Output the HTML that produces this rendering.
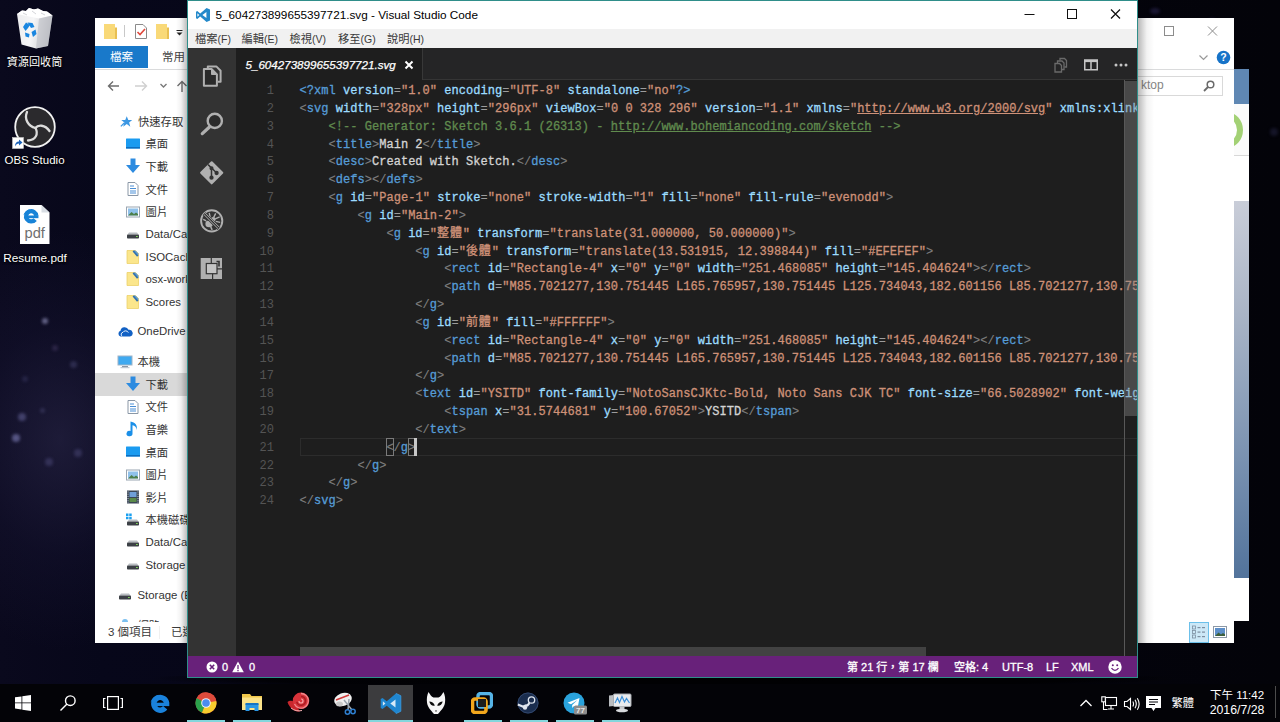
<!DOCTYPE html>
<html lang="zh-Hant">
<head>
<meta charset="utf-8">
<title>5_604273899655397721.svg - Visual Studio Code</title>
<style>
*{box-sizing:border-box;margin:0;padding:0}
html,body{width:1280px;height:722px;overflow:hidden;background:#05050f}
body{position:relative;font-family:"Liberation Sans","Noto Sans CJK TC",sans-serif;font-size:12px;color:#000}
.abs{position:absolute}
#desktop{position:absolute;left:0;top:0;width:1280px;height:722px;overflow:hidden;
 background:
 radial-gradient(ellipse 150px 210px at 60px 440px, rgba(50,46,84,.5), rgba(30,27,62,.28) 55%, rgba(0,0,0,0) 100%),
 linear-gradient(90deg,#0a091d 0,#07071a 8%,#040410 60%,#030309 100%);}
.star{position:absolute;border-radius:50%;background:rgba(150,150,200,.35);filter:blur(1.5px)}
.dicon{position:absolute;color:#fff;font-size:11.5px;text-align:center;white-space:nowrap;text-shadow:0 1px 2px #000,0 0 3px #000}
/* ---------- explorer ---------- */
#exp{position:absolute;left:95px;top:18px;width:1139px;height:625px;background:#fff;overflow:hidden}
#exp .t{position:absolute;white-space:nowrap;color:#333;font-size:12px;line-height:14px}
/* ---------- third window ---------- */
#w3{position:absolute;left:1234px;top:69px;width:15px;height:552px;background:#fff;overflow:hidden}
/* ---------- vscode ---------- */
#vs{position:absolute;left:187px;top:0;width:951px;height:678px;background:#1e1e1e;border:1px solid #2f8e8a;overflow:hidden}
#vs .titlebar{position:absolute;left:0;top:0;width:949px;height:28px;background:#fff}
#vs .menubar{position:absolute;left:0;top:28px;width:949px;height:19px;background:#f1f1f1;font-size:10.5px;color:#3a3a3a}
#vs .menubar span{position:absolute;top:3px;line-height:14px;white-space:nowrap}
#vs .menubar b{font-weight:normal;font-size:11.250px}
#act{position:absolute;left:0;top:47px;width:47.500px;height:608px;background:#333}
#tabs{position:absolute;left:48px;top:47px;width:901px;height:32px;background:#252526;border-bottom:1px solid #353535}
#tab1{position:absolute;left:0;top:0;width:187px;height:32px;background:#1e1e1e;border-right:1px solid #383838;color:#fff;font-style:italic;font-size:11.5px}
#code{position:absolute;left:48px;top:79px;width:901px;height:576px;background:#1e1e1e;overflow:hidden;
 font-family:"Liberation Mono","Noto Sans CJK TC",monospace;font-size:12px;letter-spacing:.038px;color:#d4d4d4;-webkit-text-stroke:.3px}
.ln{position:absolute;left:0;width:38px;text-align:right;color:#545454;-webkit-text-stroke:0;height:18px;line-height:18px;white-space:pre}
.cl{position:absolute;left:63.500px;height:18px;line-height:18px;white-space:pre}
.e{color:#9c9c9c;-webkit-text-stroke:0}.g{color:#808080;-webkit-text-stroke:.1px}.b{color:#569cd6}.a{color:#9cdcfe}.s{color:#ce9178}.c{color:#608b4e}.u{text-decoration:underline}
.cj{letter-spacing:.78px;font-style:normal}
#status{position:absolute;left:0;top:655px;width:949px;height:21px;background:#68217a;color:#fff;font-size:11px}
#status span{position:absolute;top:3.800px;line-height:15px;white-space:nowrap;-webkit-text-stroke:.3px}
/* ---------- taskbar ---------- */
#task{position:absolute;left:0;top:682px;width:1280px;height:40px;background:linear-gradient(180deg,rgba(3,3,8,0) 0,rgba(3,3,8,0) 2px,#030307 2.500px)}
.ul{position:absolute;top:38px;height:2px;background:#84d6dc}
</style>
</head>
<body>
<div id="desktop">
 <div class="star" style="left:42px;top:318px;width:6px;height:6px;background:rgba(170,170,215,.55)"></div>
<div class="star" style="left:18px;top:413px;width:8px;height:8px;background:rgba(130,130,195,.4)"></div>
<div class="star" style="left:12px;top:434px;width:8px;height:8px;background:rgba(150,150,215,.5)"></div>
<div class="star" style="left:45px;top:458px;width:8px;height:8px;background:rgba(110,105,170,.3)"></div>
<div class="star" style="left:74px;top:449px;width:8px;height:8px;background:rgba(110,105,170,.3)"></div>
<div class="star" style="left:70px;top:361px;width:7px;height:7px;background:rgba(110,110,170,.28)"></div>
<div class="star" style="left:52px;top:345px;width:6px;height:6px;background:rgba(120,100,160,.25)"></div>
<div class="star" style="left:40px;top:408px;width:5px;height:5px;background:rgba(120,120,180,.25)"></div>
<div class="star" style="left:22px;top:376px;width:6px;height:6px;background:rgba(100,100,160,.22)"></div>
<div class="star" style="left:1208px;top:18px;width:8px;height:8px;background:rgba(60,60,110,.35)"></div>
<div class="star" style="left:1270px;top:128px;width:8px;height:8px;background:rgba(60,60,110,.3)"></div>
<div class="star" style="left:1150px;top:8px;width:10px;height:6px;background:rgba(70,60,130,.35)"></div>

 <!-- recycle bin -->
<svg class="abs" style="left:14px;top:4px" width="42" height="48" viewBox="0 0 42 48">
 <defs><linearGradient id="rb" x1="0" y1="0" x2="1" y2="0.200"><stop offset="0" stop-color="#ececee"/><stop offset="0.500" stop-color="#f6f6f7"/><stop offset="1" stop-color="#c9cace"/></linearGradient></defs>
 <path d="M3 10L8 6.500L12 7L15 4L20 5.500L24 4.500L29 7L33 7.500L38.500 11.500L34 42L22 44.500L7.500 40.500Z" fill="url(#rb)"/>
 <path d="M3 10L8 6.500L12 7L15 4L20 5.500L24 4.500L29 7L33 7.500L38.500 11.500L25 14.500Z" fill="#ffffff"/>
 <path d="M25 14.500L38.500 11.500L34 42L22 44.500Z" fill="#b4b6bd" opacity=".5"/>
 <path d="M9 9L13 11M18 7L22 10M27 9L31 11" stroke="#d4d5d9" stroke-width="1" fill="none"/>
 <g fill="#1a86e0"><path d="M9 23L12 18.500L16 21L14 24L11.500 27Z"/><path d="M13.500 18.500L18.500 19L20.500 23L17 24Z"/><path d="M11 28.500L15.500 30L15 33.500L11.500 32.500Z"/><path d="M17.500 28L21.500 25.500L22.500 30L19 33Z"/></g>
</svg>
<div class="dicon" style="left:0;top:55px;width:69px;font-size:11.100px;line-height:15px">資源回收筒</div>
<!-- OBS -->
<svg class="abs" style="left:12px;top:104px" width="46" height="46" viewBox="0 0 46 46">
 <circle cx="23" cy="23" r="19.800" fill="#2b2a2d" stroke="#f2f2f2" stroke-width="1.800"/>
 <g fill="none" stroke="#dcdcdc" stroke-width="2.300" stroke-linecap="round"><path d="M15 8C12 15 16 22 23.500 24"/><path d="M37.500 27C33 20.500 26 20.500 23.500 24"/><path d="M16 36.500C24 36 26.500 30 23.500 24"/></g>
 <rect x="0.500" y="33.500" width="11" height="11" fill="#fff" stroke="#c8c8c8" stroke-width="0.600"/><path d="M3 42.500C3 39 4.500 37.500 7 37.500V35.500L10.500 38.500L7 41.500V39.500C5 39.500 4 40.500 3 42.500Z" fill="#1c62b8"/>
</svg>
<div class="dicon" style="left:0;top:153px;width:69px;font-size:11.500px;line-height:15px">OBS Studio</div>
<!-- Resume.pdf -->
<svg class="abs" style="left:19px;top:204px" width="32" height="41" viewBox="0 0 32 41">
 <path d="M1 1H22.500L30.500 8.500V40H1Z" fill="#fff"/><path d="M22.500 1V8.500H30.500Z" fill="#d8dde3"/>
 <g transform="translate(4 3.700) scale(.8)"><g fill="none" stroke="#1883d7"><path d="M16.600 10.300A6.400 6.400 0 1 0 15.200 14.800" stroke-width="5.400"/><path d="M5.500 11.400H19.300" stroke-width="3.400"/></g><path d="M0.500 9.500C1.500 5.500 4.500 2.800 8.500 1.800L7 6C4.500 6.500 2.200 7.600 0.500 9.500Z" fill="#1883d7"/></g>
 <text x="15.700" y="34" font-size="14.700" fill="#6f6f6f" text-anchor="middle" font-family="Liberation Sans, sans-serif">pdf</text>
</svg>
<div class="dicon" style="left:0;top:251px;width:70px;font-size:11.800px;line-height:15px">Resume.pdf</div>

</div>

<div id="w3"><div class="abs" style="left:0;top:0;width:15px;height:35px;background:#5f87b3"></div>
<div class="abs" style="left:0;top:35px;width:15px;height:52px;background:#fbfbfb;border-bottom:1px solid #d8d8d8"></div>
<div class="abs" style="left:-24px;top:43px;width:33px;height:36px;border-radius:50%;border:6px solid #a3d175;background:#fff"></div>
<div class="abs" style="left:0;top:132px;width:15px;height:377px;background:linear-gradient(180deg,#c9cdd8,#a9b4c6 30%,#7e95b3 65%,#52739b)"></div>
</div>
<div id="exp"><svg class="abs" style="left:8px;top:4.5px" width="15" height="17" viewBox="0 0 15 17"><path d="M1 1H12V16H1Z" fill="#f9d978"/><path d="M12 4.500H14V16H12Z" fill="#e8bf52"/></svg>
<div class="abs" style="left:29px;top:7px;width:1px;height:12px;background:#c8c8c8"></div>
<svg class="abs" style="left:39px;top:5px" width="14" height="17" viewBox="0 0 14 17"><path d="M1.500 1.500H9L12.500 5V15.500H1.500Z" fill="#fff" stroke="#8a8a8a" stroke-width="1"/><path d="M3.500 9L6 11.500L11 6" fill="none" stroke="#e0483c" stroke-width="1.600"/></svg>
<svg class="abs" style="left:60px;top:4.5px" width="15" height="17" viewBox="0 0 15 17"><path d="M1 1H12V16H1Z" fill="#f9d978"/><path d="M12 4.500H14V16H12Z" fill="#e8bf52"/></svg>
<svg class="abs" style="left:81px;top:11.5px" width="7" height="7" viewBox="0 0 7 7"><path d="M0.500 0.500H6.500" stroke="#222" stroke-width="1"/><path d="M0.500 2.500H6.500L3.500 5.500Z" fill="#222"/></svg>
<svg class="abs" style="left:1065px;top:4px" width="70" height="18" viewBox="0 0 70 18"><g fill="none" stroke="#8c8c8c" stroke-width="1"><rect x="4.500" y="4.500" width="9" height="9"/><path d="M48 4.500L57 13.500M57 4.500L48 13.500"/></g></svg>
<div class="abs" style="left:0;top:28px;width:53px;height:22px;background:#1979ca"></div>
<div class="t" style="left:15px;top:31.5px;color:#fff;font-size:11.500px">檔案</div>
<div class="t" style="left:67px;top:31.5px;color:#444;font-size:11.500px">常用</div>
<svg class="abs" style="left:1102.5px;top:35.5px" width="11" height="7" viewBox="0 0 11 7"><path d="M1.500 1.500L5.500 5.500L9.500 1.500" fill="none" stroke="#999" stroke-width="1.200"/></svg>
<svg class="abs" style="left:1121px;top:32px" width="15" height="15" viewBox="0 0 15 15"><circle cx="7.500" cy="7.500" r="6.800" fill="#1673c8"/><text x="7.500" y="11.300" font-size="10.500" font-weight="bold" fill="#fff" text-anchor="middle" font-family="Liberation Sans, sans-serif">?</text></svg>
<div class="abs" style="left:0;top:51px;width:1139px;height:1px;background:#dadbdc"></div>
<svg class="abs" style="left:11px;top:61px" width="84" height="14" viewBox="0 0 84 14"><g fill="none" stroke-width="1.400"><path d="M13 7H2.500M7 2.500L2.500 7L7 11.500" stroke="#6e6e6e"/><path d="M29 7H40.500M36 2.500L40.500 7L36 11.500" stroke="#d0d0d0"/><path d="M54.500 5L57.500 8L60.500 5" stroke="#7a7a7a"/><path d="M76 13V2.500M71.500 7L76 2.500L80.500 7" stroke="#6e6e6e"/></g></svg>
<div class="abs" style="left:1005px;top:57.5px;width:123px;height:20px;border:1px solid #d9d9d9;background:#fff"></div>
<div class="t" style="left:1046px;top:60px;color:#858585;font-size:12px">ktop</div>
<svg class="abs" style="left:1107px;top:61px" width="14" height="14" viewBox="0 0 14 14"><circle cx="8.500" cy="5.500" r="3.300" fill="none" stroke="#6a6a6a" stroke-width="1.500"/><path d="M6 8L2 12" stroke="#6a6a6a" stroke-width="1.800"/></svg>
<div class="abs" style="left:0;top:355px;width:200px;height:22.500px;background:#d9d9d9"></div>
<div class="abs" style="left:0;top:0;width:200px;height:604px;overflow:hidden"><svg class="abs" style="left:24.75px;top:96.55px" width="13.5" height="13.5" viewBox="0 0 16 16"><path d="M8 1.500L9.800 6H14.500L10.800 9L12.200 13.800L8 10.800L3.800 13.800L5.200 9L1.500 6H6.200Z" fill="#3b97e3"/><path d="M1 13.500L5 9.500" stroke="#3b97e3" stroke-width="1.500"/></svg><div class="t" style="left:43px;top:96.8px;font-size:11.300px">快速存取</div><svg class="abs" style="left:29.5px;top:117.6px" width="16" height="16" viewBox="0 0 16 16"><rect x="1" y="2.500" width="14" height="10" rx="0.500" fill="#1a9bf0"/><rect x="1" y="11" width="14" height="1.500" fill="#0c6fc0"/></svg><div class="t" style="left:50.5px;top:119.1px;font-size:11.300px">桌面</div><svg class="abs" style="left:29.5px;top:140.4px" width="16" height="16" viewBox="0 0 16 16"><path d="M5.500 0.500H10.500V7H15L8 15L1 7H5.500Z" fill="#2d8be0"/></svg><div class="t" style="left:50.5px;top:141.9px;font-size:11.300px">下載</div><svg class="abs" style="left:29.5px;top:163.1px" width="16" height="16" viewBox="0 0 16 16"><path d="M3 1.500H10L13 4.500V14.500H3Z" fill="#fff" stroke="#8a97a6" stroke-width="1"/><path d="M5 5H9M5 7.500H11M5 10H11M5 12H11" stroke="#4a8fd6" stroke-width="1"/></svg><div class="t" style="left:50.5px;top:164.6px;font-size:11.300px">文件</div><svg class="abs" style="left:29.5px;top:185.8px" width="16" height="16" viewBox="0 0 16 16"><rect x="1.500" y="3" width="13" height="10" fill="#fff" stroke="#9aa5b1" stroke-width="1"/><rect x="3" y="4.500" width="10" height="7" fill="#8fc1ea"/><path d="M3 11.500L6.500 8L9 10L11 8.500L13 10V11.500Z" fill="#4d7f4a"/></svg><div class="t" style="left:50.5px;top:187.3px;font-size:11.300px">圖片</div><svg class="abs" style="left:29.5px;top:208.4px" width="16" height="16" viewBox="0 0 16 16"><path d="M2.500 8.500L4 6.500H12L13.500 8.500Z" fill="#b9bdc2"/><rect x="2" y="8.500" width="12" height="4" rx="0.800" fill="#3c4046"/><rect x="11" y="10" width="1.800" height="1" fill="#7fd35a"/></svg><div class="t" style="left:50.5px;top:209.2px;font-size:11.400px">Data/Cache</div><svg class="abs" style="left:29.5px;top:230.8px" width="16" height="16" viewBox="0 0 16 16"><path d="M2 1.500H10.500L13.500 4.500V14.500H2Z" fill="#fbe68c" stroke="#ecd06a" stroke-width="0.800"/><path d="M8.300 1.800L12.800 7" stroke="#2f6fb0" stroke-width="2" fill="none"/><path d="M8.800 1.500L10.800 1.800L13.300 4.600V6.500Z" fill="#5b9bd5"/></svg><div class="t" style="left:50.5px;top:231.6px;font-size:11.400px">ISOCache</div><svg class="abs" style="left:29.5px;top:253.4px" width="16" height="16" viewBox="0 0 16 16"><path d="M2 1.500H10.500L13.500 4.500V14.500H2Z" fill="#fbe68c" stroke="#ecd06a" stroke-width="0.800"/><path d="M8.300 1.800L12.800 7" stroke="#2f6fb0" stroke-width="2" fill="none"/><path d="M8.800 1.500L10.800 1.800L13.300 4.600V6.500Z" fill="#5b9bd5"/></svg><div class="t" style="left:50.5px;top:254.2px;font-size:11.400px">osx-work</div><svg class="abs" style="left:29.5px;top:276px" width="16" height="16" viewBox="0 0 16 16"><path d="M2 1.500H10.500L13.500 4.500V14.500H2Z" fill="#fbe68c" stroke="#ecd06a" stroke-width="0.800"/><path d="M8.300 1.800L12.800 7" stroke="#2f6fb0" stroke-width="2" fill="none"/><path d="M8.800 1.500L10.800 1.800L13.300 4.600V6.500Z" fill="#5b9bd5"/></svg><div class="t" style="left:50.5px;top:276.8px;font-size:11.400px">Scores</div><svg class="abs" style="left:22px;top:305.5px" width="16" height="16" viewBox="0 0 16 16"><path d="M3.500 12.500A3 3 0 0 1 3.500 6.800A4.200 4.200 0 0 1 11.500 5.800A3.400 3.400 0 0 1 13 12.500Z" fill="#1261c4"/><path d="M5 12.200A2.200 2.200 0 0 1 6 8.300A3 3 0 0 1 11.300 8.600" fill="none" stroke="#fff" stroke-width="0.900"/></svg><div class="t" style="left:42.5px;top:306.3px;font-size:11.400px">OneDrive</div><svg class="abs" style="left:22px;top:335.7px" width="16" height="16" viewBox="0 0 16 16"><rect x="1" y="2" width="14" height="9" fill="#3fa9f0" stroke="#9fb4c7" stroke-width="1"/><rect x="5" y="12" width="6" height="1.200" fill="#8a97a6"/><rect x="3.500" y="13.200" width="9" height="1" fill="#b4bfca"/></svg><div class="t" style="left:42.5px;top:337.2px;font-size:11.300px">本機</div><svg class="abs" style="left:29.5px;top:358.3px" width="16" height="16" viewBox="0 0 16 16"><path d="M5.500 0.500H10.500V7H15L8 15L1 7H5.500Z" fill="#2d8be0"/></svg><div class="t" style="left:50.5px;top:359.8px;font-size:11.300px">下載</div><svg class="abs" style="left:29.5px;top:380.8px" width="16" height="16" viewBox="0 0 16 16"><path d="M3 1.500H10L13 4.500V14.500H3Z" fill="#fff" stroke="#8a97a6" stroke-width="1"/><path d="M5 5H9M5 7.500H11M5 10H11M5 12H11" stroke="#4a8fd6" stroke-width="1"/></svg><div class="t" style="left:50.5px;top:382.3px;font-size:11.300px">文件</div><svg class="abs" style="left:29.5px;top:403.4px" width="16" height="16" viewBox="0 0 16 16"><path d="M7.500 0.500V12.500A3 2.700 0 1 1 5.500 10V0.500C10 1.500 13 4 11.500 9C11.500 6 10 4.500 7.500 4.200Z" fill="#1a8fe8"/></svg><div class="t" style="left:50.5px;top:404.9px;font-size:11.300px">音樂</div><svg class="abs" style="left:29.5px;top:426px" width="16" height="16" viewBox="0 0 16 16"><rect x="1" y="2.500" width="14" height="10" rx="0.500" fill="#1a9bf0"/><rect x="1" y="11" width="14" height="1.500" fill="#0c6fc0"/></svg><div class="t" style="left:50.5px;top:427.5px;font-size:11.300px">桌面</div><svg class="abs" style="left:29.5px;top:448.6px" width="16" height="16" viewBox="0 0 16 16"><rect x="1.500" y="3" width="13" height="10" fill="#fff" stroke="#9aa5b1" stroke-width="1"/><rect x="3" y="4.500" width="10" height="7" fill="#8fc1ea"/><path d="M3 11.500L6.500 8L9 10L11 8.500L13 10V11.500Z" fill="#4d7f4a"/></svg><div class="t" style="left:50.5px;top:450.1px;font-size:11.300px">圖片</div><svg class="abs" style="left:29.5px;top:471.2px" width="16" height="16" viewBox="0 0 16 16"><rect x="2" y="1.500" width="12" height="13" fill="#3b4656"/><rect x="4.500" y="3" width="7" height="5" fill="#6f9fd8"/><rect x="4.500" y="9" width="7" height="4" fill="#5a8a4a"/><path d="M3 2.500V14M13 2.500V14" stroke="#cfd6de" stroke-width="1" stroke-dasharray="1 1.200"/></svg><div class="t" style="left:50.5px;top:472.7px;font-size:11.300px">影片</div><svg class="abs" style="left:29.5px;top:493.8px" width="16" height="16" viewBox="0 0 16 16"><path d="M2.500 9.500L4 7.500H12L13.500 9.500Z" fill="#b9bdc2"/><rect x="2" y="9.500" width="12" height="4" rx="0.800" fill="#3c4046"/><rect x="11" y="11" width="1.800" height="1" fill="#7fd35a"/><path d="M1 1.500H3.500V4H1ZM4.200 1.500H6.700V4H4.200ZM1 4.700H3.500V7.200H1ZM4.200 4.700H6.700V7.200H4.200Z" fill="#1aa0f0"/></svg><div class="t" style="left:50.5px;top:495.3px;font-size:11.300px">本機磁碟 (C:)</div><svg class="abs" style="left:29.5px;top:516.4px" width="16" height="16" viewBox="0 0 16 16"><path d="M2.500 8.500L4 6.500H12L13.500 8.500Z" fill="#b9bdc2"/><rect x="2" y="8.500" width="12" height="4" rx="0.800" fill="#3c4046"/><rect x="11" y="10" width="1.800" height="1" fill="#7fd35a"/></svg><div class="t" style="left:50.5px;top:517.2px;font-size:11.400px">Data/Cache (D:)</div><svg class="abs" style="left:29.5px;top:539px" width="16" height="16" viewBox="0 0 16 16"><path d="M2.500 8.500L4 6.500H12L13.500 8.500Z" fill="#b9bdc2"/><rect x="2" y="8.500" width="12" height="4" rx="0.800" fill="#3c4046"/><rect x="11" y="10" width="1.800" height="1" fill="#7fd35a"/></svg><div class="t" style="left:50.5px;top:539.8px;font-size:11.400px">Storage (E:)</div><svg class="abs" style="left:22px;top:568.8px" width="16" height="16" viewBox="0 0 16 16"><path d="M2.500 8.500L4 6.500H12L13.500 8.500Z" fill="#b9bdc2"/><rect x="2" y="8.500" width="12" height="4" rx="0.800" fill="#3c4046"/><rect x="11" y="10" width="1.800" height="1" fill="#7fd35a"/></svg><div class="t" style="left:42.5px;top:569.6px;font-size:11.400px">Storage (E:)</div><svg class="abs" style="left:22px;top:599.5px" width="16" height="16" viewBox="0 0 16 16"><rect x="3" y="6" width="10" height="7" fill="#3fa9f0" stroke="#9fb4c7"/><circle cx="8" cy="4" r="3" fill="#7cc0f0"/></svg><div class="t" style="left:42.5px;top:601px;font-size:11.300px">網路</div></div>
<div class="t" style="left:13px;top:606.5px;color:#3a3a3a;font-size:11.500px">3 個項目</div>
<div class="abs" style="left:64px;top:608px;width:1px;height:13px;background:#f0f0f0"></div>
<div class="t" style="left:76px;top:606.5px;color:#3a3a3a;font-size:11.500px">已選取 1 個項目</div>
<div class="abs" style="left:1094px;top:603.5px;width:20px;height:21px;background:#cce8f7;border:1px solid #6cc0ea"></div>
<svg class="abs" style="left:1097px;top:607px" width="14" height="14" viewBox="0 0 14 14"><g fill="#7d8ea0"><rect x="0.500" y="1" width="3" height="3" fill="none" stroke="#7d8ea0" stroke-width="0.800"/><rect x="0.500" y="5.500" width="3" height="3" fill="none" stroke="#7d8ea0" stroke-width="0.800"/><rect x="0.500" y="10" width="3" height="3" fill="none" stroke="#7d8ea0" stroke-width="0.800"/><rect x="5.500" y="2" width="3" height="1.200"/><rect x="10" y="2" width="3" height="1.200"/><rect x="5.500" y="6.500" width="3" height="1.200"/><rect x="10" y="6.500" width="3" height="1.200"/><rect x="5.500" y="11" width="3" height="1.200"/><rect x="10" y="11" width="3" height="1.200"/></g></svg>
<svg class="abs" style="left:1117.5px;top:608px" width="14" height="12" viewBox="0 0 14 12"><rect x="0.500" y="0.500" width="13" height="11" fill="#fff" stroke="#8c98a6" stroke-width="1"/><rect x="2" y="2" width="10" height="8" fill="#5d8fc9"/><path d="M2 10L5.500 6.500L8 8.500L10 7L12 8.500V10Z" fill="#3d5f3a"/></svg>
<div class="abs" style="left:81px;top:0;width:11px;height:625px;background:linear-gradient(90deg,rgba(0,0,0,0),rgba(0,0,0,.05) 45%,rgba(0,0,0,.26))"></div>
<div class="abs" style="left:1043px;top:0;width:16px;height:625px;background:linear-gradient(270deg,rgba(0,0,0,0),rgba(0,0,0,.05) 45%,rgba(0,0,0,.28))"></div></div>

<div class="abs" style="left:150px;top:676px;width:1030px;height:12px;background:radial-gradient(ellipse 50% 100% at 50% 20%,rgba(0,0,0,.9),rgba(0,0,0,.75) 80%,rgba(0,0,0,0))"></div>
<div id="vs">
 <div class="titlebar"><svg class="abs" style="left:7px;top:5.500px" width="16" height="16" viewBox="0 0 16 16"><path d="M11.6 1 L15 2.6 V13.4 L11.6 15 L5.2 9.6 L2.3 11.9 L1 11.2 V4.8 L2.3 4.1 L5.2 6.4 Z M11.4 4.9 L7.4 8 L11.4 11.1 Z M2.4 6.3 V9.7 L4.2 8 Z" fill="#2489ca" fill-rule="evenodd"/></svg>
<div class="abs" style="left:27.500px;top:7px;font-size:11.750px;line-height:14px;color:#000;white-space:nowrap">5_604273899655397721.svg - Visual Studio Code</div>
<svg class="abs" style="left:830px;top:-1px" width="118" height="28" viewBox="0 0 118 28"><g stroke="#111" stroke-width="1" fill="none"><path d="M6.5 14.5H16.5"/><rect x="49.500" y="9.500" width="9" height="9"/><path d="M93 9.500L102 18.500M102 9.500L93 18.500" stroke-width="1.250"/></g></svg>
</div>
 <div class="menubar"><span style="left:7px"><b>檔案</b>(F)</span><span style="left:53.5px"><b>編輯</b>(E)</span><span style="left:101.5px"><b>檢視</b>(V)</span><span style="left:150px"><b>移至</b>(G)</span><span style="left:199px"><b>說明</b>(H)</span></div>
 <div id="act"><svg class="abs" style="left:0;top:0" width="48" height="260" viewBox="0 0 48 260">
<g fill="none" stroke="#b0b0b0" stroke-width="2" stroke-linejoin="round">
 <!-- files -->
 <path d="M15.900 20.900H23.500L28.900 26.500V37.700H15.900Z" fill="#2a2a2a"/><path d="M23.500 20.900V26.500H28.900Z" fill="#b0b0b0" stroke-width="1"/>
 <path d="M19.800 20V18.400H28.300L32.600 22.700V33.800H30"/>
 <!-- search -->
 <circle cx="26.800" cy="72.900" r="7.100" stroke-width="2.400" fill="#2b2b2b"/><path d="M21.200 79.300L14.300 85.600" stroke-width="3.300" stroke-linecap="round"/>
</g>
<!-- git -->
<g transform="translate(23.700 124.800)"><path d="M0 -10.600L10.600 0L0 10.600L-10.600 0Z" fill="#b0b0b0" stroke="#b0b0b0" stroke-width="2" stroke-linejoin="round"/>
 <g stroke="#333" stroke-width="1.500" fill="#333"><path d="M-3.600 -8.200L-0.200 -4.800V4.700M-0.200 -4.800L4.800 0" fill="none"/><circle cx="-0.200" cy="-4.600" r="1.300"/><circle cx="-0.200" cy="4.900" r="1.400"/><circle cx="4.900" cy="0.200" r="1.400"/></g></g>
<!-- debug -->
<g transform="translate(23.700 172.900)" fill="none" stroke="#b0b0b0"><circle r="10.600" stroke-width="1.900"/>
 <ellipse cx="-2.600" cy="3" rx="3.700" ry="3.300" fill="#b0b0b0" stroke="none"/><circle cx="1.500" cy="-1.500" r="2.400" fill="#b0b0b0" stroke="none"/>
 <path d="M-1.500 -3.500L-2.500 -8M2 -3.500L4 -7.500M3.500 -2L8 -4M4 0.500L8.500 1.500M2.500 3L6.500 6M-5.500 0L-8.500 -1.500M-1 6L0.500 9" stroke-width="1.400"/>
 <path d="M-7.600 -7.300L7.300 7.600" stroke="#333" stroke-width="4"/><path d="M-8 -6.600L6.600 8M-6.600 -8L8 6.600" stroke-width="1"/></g>
<!-- extensions -->
<g><rect x="12.700" y="210" width="21.300" height="21" fill="#b0b0b0"/>
 <path d="M23.300 210V216M24.600 225.200V231M28.500 220.800H34" stroke="#333" stroke-width="1.200" fill="none"/>
 <path d="M28.500 213.500H31V218.500" stroke="#333" stroke-width="1.600" fill="none"/>
 <rect x="18.300" y="215.500" width="10.700" height="10.200" fill="#c4c4c4" stroke="#333" stroke-width="1.200"/></g>
</svg>
</div>
 <div id="tabs"><div id="tab1"><div class="abs" style="left:9.500px;top:10.200px;line-height:14px;white-space:nowrap;font-size:11.600px;-webkit-text-stroke:.25px">5_604273899655397721.svg</div>
<svg class="abs" style="left:168px;top:12px" width="10" height="10" viewBox="0 0 10 10"><path d="M1.5 1.5L8.500 8.500M8.500 1.500L1.500 8.500" stroke="#fff" stroke-width="2" fill="none"/></svg>
</div><svg class="abs" style="left:816px;top:8px" width="18" height="18" viewBox="0 0 18 18" fill="none" stroke="#6a6a6a" stroke-width="1.300"><path d="M3 7.500h4.500l2 2V16H3z"/><path d="M5.500 7V5h4.500l2 2v6.500H10"/><path d="M8 4.500V2.500h4.500l2 2V11H12.500"/></svg>
<svg class="abs" style="left:848px;top:11px" width="14" height="12" viewBox="0 0 14 12"><rect x="0.750" y="1.250" width="12.500" height="9.500" fill="none" stroke="#c5c5c5" stroke-width="1.500"/><rect x="0" y="0.500" width="14" height="2.600" fill="#c5c5c5"/><rect x="6.250" y="1" width="1.500" height="10" fill="#c5c5c5"/></svg>
<svg class="abs" style="left:877px;top:14px" width="16" height="6" viewBox="0 0 16 6" fill="#c5c5c5"><circle cx="3" cy="3" r="1.500"/><circle cx="8" cy="3" r="1.500"/><circle cx="13" cy="3" r="1.500"/></svg>
</div>
 <div id="code"><div class="ln" style="top:2.10px">1</div><div class="cl" style="top:2.10px"><span class="b">&lt;?</span><span class="b">xml</span> <span class="a">version</span><span class="e">=</span><span class="s">"1.0"</span> <span class="a">encoding</span><span class="e">=</span><span class="s">"UTF-8"</span> <span class="a">standalone</span><span class="e">=</span><span class="s">"no"</span><span class="b">?&gt;</span></div>
<div class="ln" style="top:19.93px">2</div><div class="cl" style="top:19.93px"><span class="g">&lt;</span><span class="b">svg</span> <span class="a">width</span><span class="e">=</span><span class="s">"328px"</span> <span class="a">height</span><span class="e">=</span><span class="s">"296px"</span> <span class="a">viewBox</span><span class="e">=</span><span class="s">"0 0 328 296"</span> <span class="a">version</span><span class="e">=</span><span class="s">"1.1"</span> <span class="a">xmlns</span><span class="e">=</span><span class="s">"<span class="u">http://www.w3.org/2000/svg</span>"</span> <span class="a">xmlns:xlink</span><span class="e">=</span><span class="s">"<span class="u">http://www.w3.org/1999/xlink</span>"</span> <span class="a">xmlns:sketch</span><span class="e">=</span><span class="s">"<span class="u">http://www.bohemiancoding.com/sketch/ns</span>"</span><span class="g">&gt;</span></div>
<div class="ln" style="top:37.76px">3</div><div class="cl" style="top:37.76px">    <span class="c">&lt;!-- Generator: Sketch 3.6.1 (26313) - <span class="u">http://www.bohemiancoding.com/sketch</span> --&gt;</span></div>
<div class="ln" style="top:55.59px">4</div><div class="cl" style="top:55.59px">    <span class="g">&lt;</span><span class="b">title</span><span class="g">&gt;</span>Main 2<span class="g">&lt;/</span><span class="b">title</span><span class="g">&gt;</span></div>
<div class="ln" style="top:73.42px">5</div><div class="cl" style="top:73.42px">    <span class="g">&lt;</span><span class="b">desc</span><span class="g">&gt;</span>Created with Sketch.<span class="g">&lt;/</span><span class="b">desc</span><span class="g">&gt;</span></div>
<div class="ln" style="top:91.25px">6</div><div class="cl" style="top:91.25px">    <span class="g">&lt;</span><span class="b">defs</span><span class="g">&gt;</span><span class="g">&lt;/</span><span class="b">defs</span><span class="g">&gt;</span></div>
<div class="ln" style="top:109.08px">7</div><div class="cl" style="top:109.08px">    <span class="g">&lt;</span><span class="b">g</span> <span class="a">id</span><span class="e">=</span><span class="s">"Page-1"</span> <span class="a">stroke</span><span class="e">=</span><span class="s">"none"</span> <span class="a">stroke-width</span><span class="e">=</span><span class="s">"1"</span> <span class="a">fill</span><span class="e">=</span><span class="s">"none"</span> <span class="a">fill-rule</span><span class="e">=</span><span class="s">"evenodd"</span><span class="g">&gt;</span></div>
<div class="ln" style="top:126.91px">8</div><div class="cl" style="top:126.91px">        <span class="g">&lt;</span><span class="b">g</span> <span class="a">id</span><span class="e">=</span><span class="s">"Main-2"</span><span class="g">&gt;</span></div>
<div class="ln" style="top:144.74px">9</div><div class="cl" style="top:144.74px">            <span class="g">&lt;</span><span class="b">g</span> <span class="a">id</span><span class="e">=</span><span class="s">"<i class="cj">整體</i>"</span> <span class="a">transform</span><span class="e">=</span><span class="s">"translate(31.000000, 50.000000)"</span><span class="g">&gt;</span></div>
<div class="ln" style="top:162.57px">10</div><div class="cl" style="top:162.57px">                <span class="g">&lt;</span><span class="b">g</span> <span class="a">id</span><span class="e">=</span><span class="s">"<i class="cj">後體</i>"</span> <span class="a">transform</span><span class="e">=</span><span class="s">"translate(13.531915, 12.398844)"</span> <span class="a">fill</span><span class="e">=</span><span class="s">"#EFEFEF"</span><span class="g">&gt;</span></div>
<div class="ln" style="top:180.40px">11</div><div class="cl" style="top:180.40px">                    <span class="g">&lt;</span><span class="b">rect</span> <span class="a">id</span><span class="e">=</span><span class="s">"Rectangle-4"</span> <span class="a">x</span><span class="e">=</span><span class="s">"0"</span> <span class="a">y</span><span class="e">=</span><span class="s">"0"</span> <span class="a">width</span><span class="e">=</span><span class="s">"251.468085"</span> <span class="a">height</span><span class="e">=</span><span class="s">"145.404624"</span><span class="g">&gt;</span><span class="g">&lt;/</span><span class="b">rect</span><span class="g">&gt;</span></div>
<div class="ln" style="top:198.23px">12</div><div class="cl" style="top:198.23px">                    <span class="g">&lt;</span><span class="b">path</span> <span class="a">d</span><span class="e">=</span><span class="s">"M85.7021277,130.751445 L165.765957,130.751445 L125.734043,182.601156 L85.7021277,130.751445 Z"</span> <span class="a">id</span><span class="e">=</span><span class="s">"Triangle-1"</span><span class="g">&gt;</span><span class="g">&lt;/</span><span class="b">path</span><span class="g">&gt;</span></div>
<div class="ln" style="top:216.06px">13</div><div class="cl" style="top:216.06px">                <span class="g">&lt;/</span><span class="b">g</span><span class="g">&gt;</span></div>
<div class="ln" style="top:233.89px">14</div><div class="cl" style="top:233.89px">                <span class="g">&lt;</span><span class="b">g</span> <span class="a">id</span><span class="e">=</span><span class="s">"<i class="cj">前體</i>"</span> <span class="a">fill</span><span class="e">=</span><span class="s">"#FFFFFF"</span><span class="g">&gt;</span></div>
<div class="ln" style="top:251.72px">15</div><div class="cl" style="top:251.72px">                    <span class="g">&lt;</span><span class="b">rect</span> <span class="a">id</span><span class="e">=</span><span class="s">"Rectangle-4"</span> <span class="a">x</span><span class="e">=</span><span class="s">"0"</span> <span class="a">y</span><span class="e">=</span><span class="s">"0"</span> <span class="a">width</span><span class="e">=</span><span class="s">"251.468085"</span> <span class="a">height</span><span class="e">=</span><span class="s">"145.404624"</span><span class="g">&gt;</span><span class="g">&lt;/</span><span class="b">rect</span><span class="g">&gt;</span></div>
<div class="ln" style="top:269.55px">16</div><div class="cl" style="top:269.55px">                    <span class="g">&lt;</span><span class="b">path</span> <span class="a">d</span><span class="e">=</span><span class="s">"M85.7021277,130.751445 L165.765957,130.751445 L125.734043,182.601156 L85.7021277,130.751445 Z"</span> <span class="a">id</span><span class="e">=</span><span class="s">"Triangle-1"</span><span class="g">&gt;</span><span class="g">&lt;/</span><span class="b">path</span><span class="g">&gt;</span></div>
<div class="ln" style="top:287.38px">17</div><div class="cl" style="top:287.38px">                <span class="g">&lt;/</span><span class="b">g</span><span class="g">&gt;</span></div>
<div class="ln" style="top:305.21px">18</div><div class="cl" style="top:305.21px">                <span class="g">&lt;</span><span class="b">text</span> <span class="a">id</span><span class="e">=</span><span class="s">"YSITD"</span> <span class="a">font-family</span><span class="e">=</span><span class="s">"NotoSansCJKtc-Bold, Noto Sans CJK TC"</span> <span class="a">font-size</span><span class="e">=</span><span class="s">"66.5028902"</span> <span class="a">font-weight</span><span class="e">=</span><span class="s">"bold"</span> <span class="a">fill</span><span class="e">=</span><span class="s">"#4A4A4A"</span><span class="g">&gt;</span></div>
<div class="ln" style="top:323.04px">19</div><div class="cl" style="top:323.04px">                    <span class="g">&lt;</span><span class="b">tspan</span> <span class="a">x</span><span class="e">=</span><span class="s">"31.5744681"</span> <span class="a">y</span><span class="e">=</span><span class="s">"100.67052"</span><span class="g">&gt;</span>YSITD<span class="g">&lt;/</span><span class="b">tspan</span><span class="g">&gt;</span></div>
<div class="ln" style="top:340.87px">20</div><div class="cl" style="top:340.87px">                <span class="g">&lt;/</span><span class="b">text</span><span class="g">&gt;</span></div>
<div class="ln" style="top:358.70px">21</div><div class="cl" style="top:358.70px">            <span class="g">&lt;/</span><span class="b">g</span><span class="g">&gt;</span></div>
<div class="ln" style="top:376.53px">22</div><div class="cl" style="top:376.53px">        <span class="g">&lt;/</span><span class="b">g</span><span class="g">&gt;</span></div>
<div class="ln" style="top:394.36px">23</div><div class="cl" style="top:394.36px">    <span class="g">&lt;/</span><span class="b">g</span><span class="g">&gt;</span></div>
<div class="ln" style="top:412.19px">24</div><div class="cl" style="top:412.19px"><span class="g">&lt;/</span><span class="b">svg</span><span class="g">&gt;</span></div><div class="abs" style="left:63.5px;top:358.40px;width:840px;height:18px;border:1.500px solid #2c2c2c;border-right:0"></div>
<div class="abs" style="left:149.87px;top:358.20px;width:8px;height:18px;border:1px solid #7a7a7a"></div>
<div class="abs" style="left:171.58px;top:358.20px;width:8px;height:18px;border:1px solid #7a7a7a"></div>
<div class="abs" style="left:177.82px;top:358.20px;width:3px;height:18px;background:#c8c8c8"></div>
<div class="abs" style="left:64px;top:567px;width:626px;height:9px;background:rgba(121,121,121,.4)"></div>
<div class="abs" style="left:888px;top:0;width:1px;height:576px;background:#585858"></div>
<div class="abs" style="left:889px;top:1px;width:13px;height:335px;background:rgba(130,130,130,.42)"></div></div>
 <div id="status"><svg class="abs" style="left:17px;top:4px" width="14" height="14" viewBox="0 0 14 14"><circle cx="7" cy="7" r="5.500" fill="#fff"/><path d="M4.800 4.800L9.200 9.200M9.200 4.800L4.800 9.200" stroke="#68217a" stroke-width="1.600"/></svg>
<span style="left:34px">0</span>
<svg class="abs" style="left:43px;top:4px" width="14" height="14" viewBox="0 0 14 14"><path d="M7 1.500L12.800 12.200H1.200Z" fill="#fff"/><path d="M7 5V9.200M7 10V11.300" stroke="#68217a" stroke-width="1.300"/></svg>
<span style="left:61px">0</span>
<span style="left:659px">第 21 行，第 17 欄</span>
<span style="left:766px">空格: 4</span>
<span style="left:814px">UTF-8</span>
<span style="left:858px">LF</span>
<span style="left:883px">XML</span>
<svg class="abs" style="left:920px;top:4px" width="14" height="14" viewBox="0 0 14 14"><circle cx="7" cy="7" r="6.700" fill="#fff"/><circle cx="4.800" cy="5.300" r="1" fill="#68217a"/><circle cx="9.200" cy="5.300" r="1" fill="#68217a"/><path d="M3.500 8.200Q7 12.500 10.500 8.200" fill="none" stroke="#68217a" stroke-width="1.300"/></svg>
</div>
</div>

<div id="task"><!-- start -->
<svg class="abs" style="left:15px;top:13px" width="16" height="16" viewBox="0 0 16 16" fill="#fff"><path d="M0 2.300L6.500 1.400V7.500H0ZM7.300 1.300L16 0V7.500H7.300ZM0 8.300H6.500V14.500L0 13.600ZM7.300 8.300H16V16L7.300 14.700Z"/></svg>
<!-- search -->
<svg class="abs" style="left:59px;top:12px" width="18" height="18" viewBox="0 0 18 18" fill="none" stroke="#fff" stroke-width="1.400"><circle cx="11.300" cy="6.700" r="4.800"/><path d="M8 10L1.500 16.500"/></svg>
<!-- task view -->
<svg class="abs" style="left:102px;top:13px" width="22" height="16" viewBox="0 0 22 16" fill="none" stroke="#fff" stroke-width="1.200"><rect x="5.600" y="1.600" width="10.800" height="12.800"/><path d="M3.500 3.500H1.600V12.500H3.500M18.500 3.500H20.400V12.500H18.500"/></svg>
<!-- edge -->
<svg class="abs" style="left:150px;top:11px" width="20" height="21" viewBox="0 0 20 21"><g fill="none" stroke="#1a82dc"><path d="M16.600 10.300A6.400 6.400 0 1 0 15.200 14.800" stroke-width="5.400"/><path d="M5.500 11.400H19.300" stroke-width="3.400"/></g><path d="M0.500 9.500C1.500 5.500 4.500 2.800 8.500 1.800L7 6C4.500 6.500 2.200 7.600 0.500 9.500Z" fill="#1a82dc"/></svg>
<!-- chrome -->
<svg class="abs" style="left:195px;top:10px" width="22" height="22" viewBox="0 0 22 22"><circle cx="11" cy="11" r="10.500" fill="#de4b3c"/><path d="M11 11L1.700 6A10.500 10.500 0 0 0 7 20.700Z" fill="#2ba24c"/><path d="M11 11L7 20.700A10.500 10.500 0 0 0 21.300 9H11Z" fill="#f8cd2d"/><path d="M11 11L21.300 9A10.500 10.500 0 0 0 1.700 6Z" fill="#de4b3c"/><circle cx="11" cy="11" r="4.800" fill="#f3f3f3"/><circle cx="11" cy="11" r="3.800" fill="#4b8cf1"/></svg>
<!-- explorer -->
<svg class="abs" style="left:241px;top:11px" width="22" height="20" viewBox="0 0 22 20"><path d="M1 1H9L10.500 3H21V17H1Z" fill="#f1c84b"/><rect x="1" y="4.500" width="20" height="12.500" fill="#fbe38a"/><path d="M4.500 11H17.500V18H13.500V15H8.500V18H4.500Z" fill="#2a97e6"/><rect x="4.500" y="10" width="13" height="2" fill="#1674c4"/></svg>
<!-- snail shell (red) -->
<svg class="abs" style="left:286px;top:9px" width="25" height="22" viewBox="0 0 25 22"><path d="M1.500 11C3.500 9 6.500 9.500 8 11L14 20.500C9 21 3.500 17.500 1.500 11Z" fill="#c9272d"/><circle cx="15" cy="9.800" r="8.300" fill="#d8333a"/><path d="M15 2.500A7.300 7.300 0 1 1 8.500 13" fill="none" stroke="#f08a8e" stroke-width="1.300"/><path d="M15 5.500A4.400 4.400 0 1 1 10.800 10.800" fill="none" stroke="#a81c22" stroke-width="1.500"/><path d="M15 8A2 2 0 1 1 13 10" fill="none" stroke="#f5a3a6" stroke-width="1.200"/><path d="M5 17C8 19.500 12 20.500 16 19.500" stroke="#f3b0b2" stroke-width="1" fill="none"/></svg>
<!-- snipping tool -->
<svg class="abs" style="left:332px;top:9px" width="26" height="24" viewBox="0 0 26 24"><ellipse cx="11" cy="8.500" rx="9" ry="6.500" fill="#f0f0f0" transform="rotate(-20 11 8.500)"/><path d="M4 9L17 4" stroke="#d23a3a" stroke-width="1.500"/><ellipse cx="7.500" cy="13" rx="3.500" ry="2.500" fill="#c9c9c9"/><path d="M12 9L20 19M17 8L16 19" stroke="#9aa4ae" stroke-width="1.500"/><circle cx="21" cy="20.500" r="2.200" fill="none" stroke="#2e7fd0" stroke-width="1.500"/><circle cx="15.500" cy="21" r="2.200" fill="none" stroke="#2e7fd0" stroke-width="1.500"/></svg>
<!-- vscode active -->
<div class="abs" style="left:368px;top:2.500px;width:45px;height:37.500px;background:#3c3c3e"></div>
<svg class="abs" style="left:378.500px;top:9.500px" width="23.500" height="23" viewBox="0 0 16 16"><path d="M11.600 1L15 2.600V13.400L11.600 15L5.200 9.600L2.300 11.900L1 11.200V4.800L2.300 4.100L5.200 6.400Z" fill="#1f86d0"/><path d="M11.300 5.200L7.700 8L11.300 10.800ZM2.500 6.400V9.600L4.300 8Z" fill="#d5e9f8"/><path d="M11.600 1L15 2.600V13.400L11.600 15" fill="none" stroke="#3a9be0" stroke-width=".6"/></svg>
<!-- foobar alien -->
<svg class="abs" style="left:425px;top:9px" width="22" height="24" viewBox="0 0 22 24"><path d="M3.500 1C5 3.500 6.500 6 8.500 6.500H13.500C15.500 6 17 3.500 18.500 1C20 4 20.500 8 20 11.500C19.500 16 16 19.500 13 23H9C6 19.500 2.500 16 2 11.500C1.500 8 2 4 3.500 1Z" fill="#f6f6f6"/><path d="M4.300 10.500C6.500 10.500 9 12 9.800 14.500C8 15.500 5 14 4.300 10.500ZM17.700 10.500C15.500 10.500 13 12 12.200 14.500C14 15.500 17 14 17.700 10.500Z" fill="#0a0a0a"/><path d="M10 19.500H12L11 21Z" fill="#111"/></svg>
<!-- vmware -->
<svg class="abs" style="left:471px;top:10px" width="22" height="22" viewBox="0 0 22 22"><rect x="7" y="1.500" width="13.500" height="13.500" rx="2.500" fill="none" stroke="#56b4e6" stroke-width="3.400"/><rect x="1.500" y="7" width="13.500" height="13.500" rx="2.500" fill="none" stroke="#f2a71d" stroke-width="3.600"/><rect x="7" y="7" width="8" height="8" fill="#1c1c1c"/></svg>
<!-- steam -->
<svg class="abs" style="left:517px;top:10px" width="22" height="22" viewBox="0 0 22 22"><circle cx="11" cy="11" r="10.500" fill="#1a2d4e"/><circle cx="11" cy="11" r="10" fill="none" stroke="#31466b" stroke-width="1"/><circle cx="14.500" cy="8" r="3.200" fill="none" stroke="#dfe5ee" stroke-width="1.300"/><path d="M0.800 12.500L7 15A2.600 2.600 0 0 1 10.500 13.500L12.500 11" stroke="#dfe5ee" stroke-width="2.200" fill="none"/><circle cx="8" cy="15.500" r="2.200" fill="#dfe5ee"/></svg>
<!-- telegram -->
<svg class="abs" style="left:563px;top:10px" width="26" height="24" viewBox="0 0 26 24"><circle cx="11" cy="11" r="10.500" fill="#2aa3dc"/><path d="M4.500 10.800L16.500 6L14.500 16.500L11 14L9.200 16V13L14.500 8L8 12.200Z" fill="#fff"/><rect x="11" y="13.500" width="13" height="9" rx="1.500" fill="#8d8d8d"/><text x="17.500" y="21" font-size="8" font-weight="bold" fill="#e6e6e6" text-anchor="middle" font-family="Liberation Sans, sans-serif">77</text></svg>
<!-- perf monitor -->
<svg class="abs" style="left:608px;top:10px" width="24" height="22" viewBox="0 0 24 22"><rect x="1" y="3.500" width="14" height="11" fill="#b9bcc0" transform="skewY(-6)"/><rect x="5.500" y="2" width="17.500" height="12.500" rx="1" fill="#e9ebee" stroke="#a7abb0" stroke-width="1"/><path d="M7 11L9.500 6L11.500 10.500L14 4.500L16.500 10L18.500 6.500L21.500 11" fill="none" stroke="#3b8fd8" stroke-width="1.200"/><rect x="11.500" y="14.500" width="5" height="3" fill="#c5c8cc"/><ellipse cx="14" cy="18.500" rx="6" ry="1.800" fill="#d8dadd"/></svg>
<!-- underlines -->
<div class="ul" style="left:187px;width:38px"></div><div class="ul" style="left:233px;width:38px"></div><div class="ul" style="left:368px;width:45px"></div>
<div class="ul" style="left:464px;width:38px"></div><div class="ul" style="left:510px;width:38px"></div><div class="ul" style="left:556px;width:38px"></div><div class="ul" style="left:602px;width:38px"></div>
<!-- tray -->
<svg class="abs" style="left:1079px;top:16px" width="14" height="10" viewBox="0 0 14 10"><path d="M1.500 8L7 2.500L12.500 8" fill="none" stroke="#fff" stroke-width="1.300"/></svg>
<svg class="abs" style="left:1100.500px;top:14px" width="17" height="16" viewBox="0 0 17 16" fill="none" stroke="#fff" stroke-width="1.100"><rect x="4.500" y="1.500" width="11" height="8"/><path d="M10 9.500V12.500M7 13H13"/><rect x="0.800" y="0.800" width="3.500" height="5" fill="#030308"/><path d="M2.500 6V13.500H6.500"/></svg>
<svg class="abs" style="left:1122.500px;top:14px" width="18" height="16" viewBox="0 0 18 16" fill="none" stroke="#fff" stroke-width="1.100"><path d="M1.500 5.500H4L7.500 2.500V13.500L4 10.500H1.500Z"/><path d="M9.800 5.500Q11.300 8 9.800 10.500M12 3.800Q14.600 8 12 12.200M14.300 2.200Q18 8 14.300 13.800"/></svg>
<svg class="abs" style="left:1145px;top:12.800px" width="17" height="18" viewBox="0 0 17 18"><path d="M1 1H16V13H10.500L8.500 16L6.500 13H1Z" fill="#fff"/><path d="M4 4.500H13M4 7H13M4 9.500H10" stroke="#030308" stroke-width="1"/></svg>
<div class="abs" style="left:1171.500px;top:14px;color:#fff;font-size:11.300px;line-height:14px;white-space:nowrap">繁體</div>
<div class="abs" style="left:1197px;top:5.500px;width:80px;text-align:center;color:#fff;font-size:11.500px;line-height:15px;white-space:nowrap">下午 11:42</div><div class="abs" style="left:1197px;top:21px;width:80px;text-align:center;color:#fff;font-size:12.300px;line-height:15px;white-space:nowrap">2016/7/28</div>
<div class="abs" style="left:1275px;top:4px;width:1px;height:32px;background:#4c4c4c"></div>
</div>
</body>
</html>
